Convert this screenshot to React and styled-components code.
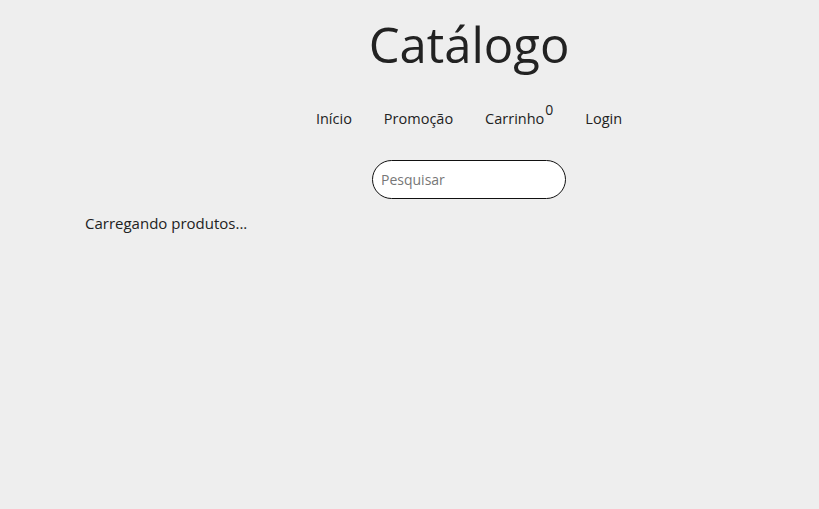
import React from "react";
import styled, { createGlobalStyle } from "styled-components";

const Global = createGlobalStyle`
*{
  box-sizing: border-box;
}
body{
  margin: 0;
  background: #eeeeee;
  font-family: 'Open Sans', 'Noto Sans', sans-serif;
  color: #222222;
}
`

const Page = styled.div`
min-height: 509px;
`

const Header = styled.header`
display: flex;
flex-direction: column;
align-items: center;
padding-left: 119px;
`

const Title = styled.h1`
margin: 13px 0 0 0;
height: 62px;
font-size: 49px;
font-weight: 400;
line-height: 62px;
color: #222222;
`

const Nav = styled.nav`
display: flex;
flex-direction: row;
gap: 32px;
margin-top: 26px;
height: 28px;
align-items: flex-end;
`

const NavItem = styled.a`
font-size: 14.5px;
line-height: 20px;
color: #222222;
text-decoration: none;
`

const Badge = styled.sup`
font-size: 14px;
line-height: 14px;
position: relative;
top: -9px;
margin-left: 1px;
vertical-align: baseline;
`

const Search = styled.input`
margin-top: 31px;
width: 194px;
height: 39px;
border: 1px solid #111111;
border-radius: 20px;
background: #ffffff;
padding: 0 8px;
font-family: 'Open Sans', 'Noto Sans', sans-serif;
font-size: 14px;
color: #222222;
&:focus{
  outline: none;
}
&::placeholder{
  color: #777777;
}
`

const Loading = styled.p`
margin: 14px 0 0 85px;
font-size: 15px;
line-height: 20px;
color: #222222;
`

function App() {
  return (
    <Page>
      <Global />
      <Header>
        <Title>Catálogo</Title>
        <Nav>
          <NavItem href="#">Início</NavItem>
          <NavItem href="#">Promoção</NavItem>
          <NavItem href="#">Carrinho<Badge>0</Badge></NavItem>
          <NavItem href="#">Login</NavItem>
        </Nav>
        <Search placeholder="Pesquisar" type="text" />
      </Header>
      <Loading>Carregando produtos...</Loading>
    </Page>
  );
}

export default App;
